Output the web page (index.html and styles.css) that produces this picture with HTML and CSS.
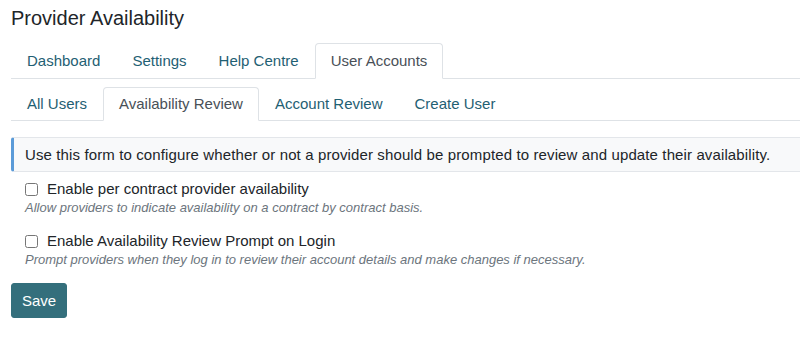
FILE: index.html
```html
<!DOCTYPE html>
<html lang="en">
<head>
    <meta charset="UTF-8">
    <title>Provider Availability</title>
    <link rel="stylesheet" href="styles.css">
</head>
<body>
    <div class="page">
        <h1 class="page-title">Provider Availability</h1>

        <!-- main tabs -->
        <ul class="tabs">
            <li><a class="tab-link" href="#">Dashboard</a></li>
            <li><a class="tab-link" href="#">Settings</a></li>
            <li><a class="tab-link" href="#">Help Centre</a></li>
            <li><a class="tab-link active" href="#">User Accounts</a></li>
        </ul>

        <!-- sub tabs -->
        <ul class="tabs sub-tabs">
            <li><a class="tab-link" href="#">All Users</a></li>
            <li><a class="tab-link active" href="#">Availability Review</a></li>
            <li><a class="tab-link" href="#">Account Review</a></li>
            <li><a class="tab-link" href="#">Create User</a></li>
        </ul>

        <div class="info-box">
            Use this form to configure whether or not a provider should be prompted to review and update their availability.
        </div>

        <form class="review-form">
            <div class="form-group">
                <label class="check-label">
                    <input type="checkbox" class="check-input">
                    Enable per contract provider availability
                </label>
                <div class="help-text">Allow providers to indicate availability on a contract by contract basis.</div>
            </div>

            <div class="form-group">
                <label class="check-label">
                    <input type="checkbox" class="check-input">
                    Enable Availability Review Prompt on Login
                </label>
                <div class="help-text">Prompt providers when they log in to review their account details and make changes if necessary.</div>
            </div>

            <button type="button" class="save-btn">Save</button>
        </form>
    </div>
</body>
</html>
```

FILE: styles.css
```css
body {
    margin: 0;
    font-family: "Liberation Sans", Arial, sans-serif;
    color: #212529;
    background: #fff;
    overflow: hidden;
}

.page {
    padding: 6px 0 0 11px;
}

.page-title {
    font-size: 20px;
    font-weight: 500;
    line-height: 24px;
    margin: 0 0 13px;
}

.tabs {
    display: flex;
    list-style: none;
    margin: 0;
    padding: 0;
    border-bottom: 1px solid #dee2e6;
}

.tabs li {
    margin-bottom: -1px;
}

.sub-tabs {
    margin-top: 8px;
}

.tab-link {
    display: block;
    padding: 8px 15px;
    font-size: 15px;
    line-height: 18px;
    color: #1f6073;
    text-decoration: none;
    border: 1px solid transparent;
    border-top-left-radius: 4px;
    border-top-right-radius: 4px;
}

.sub-tabs .tab-link {
    padding: 7px 15px;
}

.tab-link.active {
    color: #495057;
    background: #fff;
    border-color: #dee2e6 #dee2e6 #fff;
}

.info-box {
    margin: 16px -6px 0 0;
    padding: 8px 11px;
    font-size: 15px;
    line-height: 17px;
    letter-spacing: 0.12px;
    background: #f8f9fa;
    border: 1px solid #e3e6ea;
    border-left: 3px solid #5b9bd8;
    border-radius: 3px;
}

.review-form {
    padding: 7px 0 0 14px;
}

.form-group {
    margin-bottom: 14px;
}

.check-label {
    display: flex;
    align-items: center;
    font-size: 15px;
    line-height: 20px;
}

.check-input {
    width: 13px;
    height: 13px;
    margin: 0 9px 0 0;
}

.help-text {
    font-size: 13px;
    line-height: 18px;
    font-style: italic;
    color: #6c757d;
}

.save-btn {
    margin-left: -14px;
    padding: 8px 10px;
    font-family: inherit;
    font-size: 15px;
    line-height: 17px;
    color: #fff;
    background: #346f7c;
    border: 1px solid #346f7c;
    border-radius: 3px;
    cursor: pointer;
}
```
